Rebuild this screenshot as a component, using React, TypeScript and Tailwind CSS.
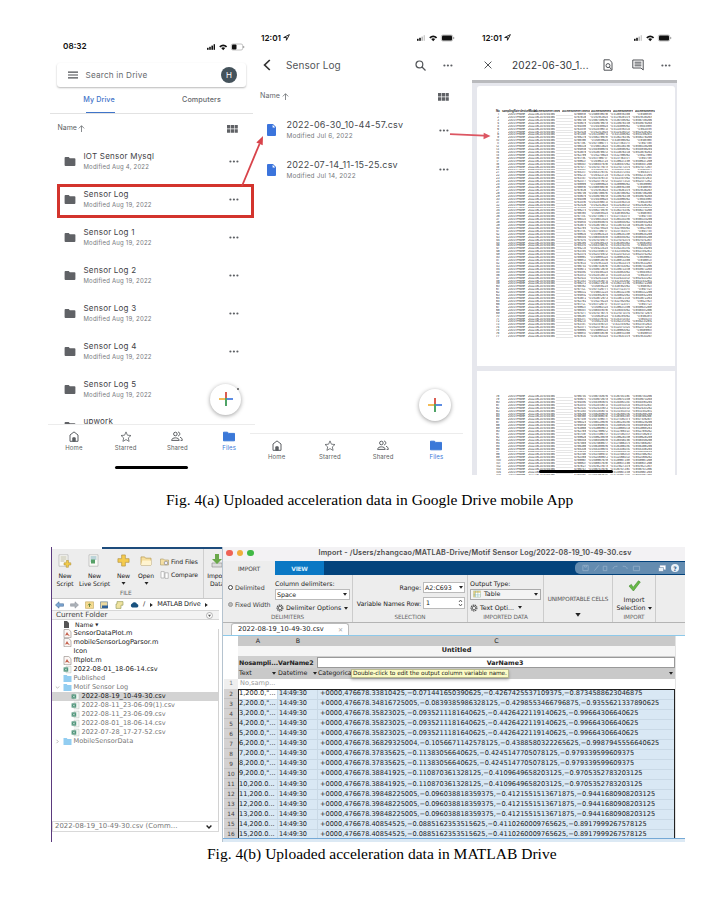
import type { ReactNode } from 'react';

const inter = "font-['Inter','Liberation_Sans',sans-serif]";
const dejavu = "font-['DejaVu_Sans',sans-serif]";

/* ---------- shared icons ---------- */

function Folder({ className }: { className: string }) {
  return (
    <svg viewBox="0 0 12 10" className={className} fill="currentColor">
      <path d="M1 0h3.6l1.2 1.3H11q1 0 1 1V9q0 1-1 1H1Q0 10 0 9V1q0-1 1-1z" />
    </svg>
  );
}

function Dots() {
  return (
    <svg viewBox="0 0 10 3" className="h-[3px] w-[10px] shrink-0" fill="#5c5f63">
      <circle cx="1.4" cy="1.5" r="1.1" />
      <circle cx="4.9" cy="1.5" r="1.1" />
      <circle cx="8.4" cy="1.5" r="1.1" />
    </svg>
  );
}

function GridIcon() {
  return (
    <svg viewBox="0 0 11 8" className="h-[8px] w-[11px] shrink-0" fill="#5f6165">
      <path d="M0 0h3.2v3.6H0zM3.8 0H7v3.6H3.8zM7.6 0h3.2v3.6H7.6zM0 4.3h3.2v3.5H0zM3.8 4.3H7v3.5H3.8zM7.6 4.3h3.2v3.5H7.6z" />
    </svg>
  );
}

function UpArrow() {
  return (
    <svg viewBox="0 0 7 7" className="h-[7px] w-[7px]" fill="none" stroke="#6b6e72" strokeWidth="0.8">
      <path d="M3.5 7V.8M.8 3.4 3.5.7l2.7 2.7" />
    </svg>
  );
}

function StatusIcons({ low, weak }: { low?: boolean; weak?: boolean }) {
  return (
    <svg viewBox="0 0 38 8" className="h-[8px] w-[38px] shrink-0" fill="#111">
      <rect x="0" y="4.8" width="1.6" height="2" />
      <rect x="2.2" y="3.8" width="1.6" height="3" />
      <rect x="4.4" y="2.6" width="1.6" height="4.2" fill={weak ? '#bbb' : '#111'} />
      <rect x="6.6" y="1.2" width="1.4" height="5.6" fill={weak ? '#ccc' : '#111'} />
      <path d="M12.2 3.2Q16.2-.4 20.2 3.2L19 4.5Q16.2 2 13.4 4.5z" />
      <path d="M14.2 5.1Q16.2 3.5 18.2 5.1L16.2 7.2z" />
      <rect x="24.3" y="1" width="11.4" height="6" rx="1.6" fill="none" stroke="#999" strokeWidth=".6" />
      <rect x="25" y="1.6" width={low ? 4.5 : 10} height="4.8" rx="1" />
      <rect x="36.2" y="3" width="1" height="2" fill="#999" />
    </svg>
  );
}

function Fab({ className }: { className: string }) {
  return (
    <div className={`absolute flex items-center justify-center rounded-full bg-white shadow-[0_1px_4px_rgba(0,0,0,0.38)] ${className}`}>
      <svg viewBox="0 0 14 14" className="h-[14px] w-[14px]">
        <path d="M6.1 0h1.8v6.1H6.1z" fill="#d64b3f" />
        <path d="M0 6.1h6.1v1.8H0z" fill="#f2b544" />
        <path d="M6.1 6.1h1.8V14H6.1z" fill="#3c9a56" />
        <path d="M7.9 6.1H14v1.8H7.9z" fill="#4a7fe0" />
      </svg>
    </div>
  );
}

function NavItem({ label, active, children }: { label: string; active?: boolean; children: ReactNode }) {
  return (
    <div className={`flex flex-1 flex-col items-center gap-[2px] ${active ? 'text-[#3b78d8]' : 'text-[#5c5f63]'}`}>
      <svg viewBox="0 0 12 11" className="h-[11px] w-[12px]" fill="none" stroke="currentColor" strokeWidth="1">
        {children}
      </svg>
      <span className="text-[6px] leading-[8px] tracking-[0.1px]">{label}</span>
    </div>
  );
}

function BottomNav({ className }: { className: string }) {
  return (
    <div className={`flex border-t border-[#ececec] ${className}`}>
      <NavItem label="Home">
        <path d="M2 10.3V4L6 .9 10 4v6.3z" />
        <path d="M4.8 10.3V6.8h2.4v3.5z" fill="currentColor" />
      </NavItem>
      <NavItem label="Starred">
        <path d="m6 .9 1.4 3.3 3.6.3-2.7 2.4.8 3.5L6 8.6l-3.1 1.8.8-3.5L1 4.5l3.6-.3z" strokeWidth=".8" />
      </NavItem>
      <NavItem label="Shared">
        <circle cx="4.4" cy="3" r="1.8" />
        <path d="M.6 9.4c0-3.4 7.6-3.4 7.6 0zM7 1.2c2.4-.4 2.4 3.8 0 3.6M9 6.3c1.4.4 2.3 1.3 2.3 3.1H9.6" />
      </NavItem>
      <NavItem label="Files" active>
        <path d="M.5 1.2h4l1.2 1.2h5.8v7.4H.5z" fill="currentColor" />
      </NavItem>
    </div>
  );
}

/* ---------- phone screens ---------- */

const folders: [string, string][] = [
  ['IOT Sensor Mysql', 'Modified Aug 4, 2022'],
  ['Sensor Log', 'Modified Aug 19, 2022'],
  ['Sensor Log 1', 'Modified Aug 19, 2022'],
  ['Sensor Log 2', 'Modified Aug 19, 2022'],
  ['Sensor Log 3', 'Modified Aug 19, 2022'],
  ['Sensor Log 4', 'Modified Aug 19, 2022'],
  ['Sensor Log 5', 'Modified Aug 19, 2022'],
];

function DriveHome() {
  return (
    <div className="relative flex h-[445px] w-[203px] flex-col">
      <div className="flex h-[33px] items-center justify-between pr-[8px] pl-[13px]">
        <span className="text-[8.2px] font-semibold text-[#111]">08:32</span>
        <StatusIcons low />
      </div>
      <div className="mx-[7px] flex h-[24px] shrink-0 items-center rounded-[3px] pr-[9px] pl-[11px] shadow-[0_1px_2px_rgba(0,0,0,0.28)]">
        <svg viewBox="0 0 10 8" className="h-[8px] w-[10px]" stroke="#4c4f53" strokeWidth="1.2">
          <path d="M0 1.2h10M0 4h10M0 6.8h10" />
        </svg>
        <span className="ml-[7.5px] text-[8.2px] tracking-[0.2px] text-[#66696d]">Search in Drive</span>
        <span className="ml-auto flex h-[16px] w-[16px] items-center justify-center rounded-full bg-[#44525b] text-[8px] text-white">H</span>
      </div>
      <div className="flex h-[27px] shrink-0 border-b border-[#e2e2e2] text-[7.2px] font-medium tracking-[0.1px]">
        <div className="flex w-[101px] flex-col items-center">
          <span className="flex h-[25px] items-center pt-[2px] pr-[3px] text-[#3f74c9]">My Drive</span>
          <span className="h-[1.5px] w-[29px] bg-[#3f74c9]" />
        </div>
        <span className="flex h-[25px] w-[101px] items-center justify-center pt-[2px] text-[#66696d]">Computers</span>
      </div>
      <div className="flex h-[29px] shrink-0 items-center justify-between pr-[15px] pl-[7.5px] text-[7px] text-[#5c5f63]">
        <span className="flex items-center gap-[1.5px]">Name <UpArrow /></span>
        <GridIcon />
      </div>
      {folders.map(([name, date], i) => (
        <div key={name} className="flex h-[37.9px] shrink-0 items-center pr-[14px] pl-[13.5px]">
          <Folder className="h-[9px] w-[12px] text-[#606266]" />
          <div className="ml-[8px] flex flex-1 flex-col gap-[1px]">
            <span className="text-[8px] leading-[10px] tracking-[0.22px] text-[#3f4246]">{name}</span>
            <span className="text-[6px] leading-[10px] tracking-[0.2px] text-[#777a7e]">{date}</span>
          </div>
          {i < 6 && <Dots />}
        </div>
      ))}
      <div className="flex h-[16px] shrink-0 items-start overflow-hidden pt-[8px] pl-[13.5px]">
        <Folder className="mt-[6px] h-[9px] w-[12px] text-[#606266]" />
        <span className="ml-[8px] text-[8px] leading-[10px] tracking-[0.22px] text-[#3f4246]">upwork</span>
      </div>
      <BottomNav className="-mx-[2px] h-[38px] shrink-0 pt-[6px]" />
      <div className="mx-auto mt-[4px] h-[2.5px] w-[73px] rounded-full bg-black" />
      <Fab className="top-[353.5px] left-[160px] h-[31px] w-[31px]" />
      <span className="absolute top-[358px] left-[187px] h-[1.5px] w-[1.5px] rounded-full bg-[#555]" />
    </div>
  );
}

function Clock() {
  return (
    <span className="flex items-center gap-[2px] text-[8.2px] font-semibold text-[#111]">
      12:01
      <svg viewBox="0 0 8 8" className="h-[7px] w-[7px]" fill="none" stroke="#111" strokeWidth="1">
        <path d="M7.3.7.8 4h3.1v3.2z" />
      </svg>
    </span>
  );
}

function FileRow({ name, date }: { name: string; date: string }) {
  return (
    <div className="flex h-[39.5px] shrink-0 items-center pr-[23px] pl-[14px]">
      <svg viewBox="0 0 9 12" className="h-[12px] w-[9px]">
        <path d="M1 0h5l3 3v8q0 1-1 1H1q-1 0-1-1V1q0-1 1-1z" fill="#3b74dc" />
        <path d="M5.6.8v2.7h2.7z" fill="#fff" />
      </svg>
      <div className="ml-[10.5px] flex flex-1 flex-col">
        <span className="text-[9px] leading-[12px] tracking-[0.22px] text-[#45484c]">{name}</span>
        <span className="text-[6.4px] leading-[10px] tracking-[0.2px] text-[#777a7e]">{date}</span>
      </div>
      <Dots />
    </div>
  );
}

function DriveFolder() {
  return (
    <div className="relative flex h-[445px] w-[219px] flex-col">
      <div className="flex h-[16px] shrink-0 items-center justify-between pr-[17px] pl-[8px]">
        <Clock />
        <StatusIcons weak />
      </div>
      <div className="flex h-[38px] shrink-0 items-center pr-[19px] pl-[10px]">
        <svg viewBox="0 0 8 12" className="h-[12px] w-[8px]" fill="none" stroke="#333" strokeWidth="1.7">
          <path d="M6.8 1 1.6 6l5.2 5" />
        </svg>
        <span className="ml-[15px] flex-1 text-[10px] tracking-[0.1px] text-[#53565a]">Sensor Log</span>
        <svg viewBox="0 0 11 11" className="mr-[17px] h-[11px] w-[11px]" fill="none" stroke="#505357" strokeWidth="1.2">
          <circle cx="4.4" cy="4.4" r="3.4" />
          <path d="m7 7 3.5 3.5" />
        </svg>
        <Dots />
      </div>
      <div className="flex h-[25px] shrink-0 items-center justify-between pr-[23px] pl-[7px] text-[7.2px] text-[#66696d]">
        <span className="flex items-center gap-[2px]">Name <UpArrow /></span>
        <GridIcon />
      </div>
      <div className="mt-[1.5px] flex-1">
        <FileRow name="2022-06-30_10-44-57.csv" date="Modified Jul 6, 2022" />
        <FileRow name="2022-07-14_11-15-25.csv" date="Modified Jul 14, 2022" />
      </div>
      <BottomNav className="mr-[9px] -ml-[3px] h-[42px] shrink-0 pt-[6px]" />
      <Fab className="top-[359px] left-[166px] h-[32px] w-[32px]" />
    </div>
  );
}

function SheetRow({ n, second }: { n: number; second?: boolean }) {
  const a = ((n * 7919) % 8999) + 1000;
  const short = (k: number) => !second && (n * k) % 5 < 2;
  return (
    <div className="flex h-[2.93px] shrink-0 items-center overflow-hidden text-[2.9px] leading-[3px] whitespace-nowrap text-[#222]">
      <span className="w-[3px] text-right">{n}</span>
      <span className="ml-[9px] w-[18px] overflow-hidden tracking-[-0.1px]">200.0 iPhone 12</span>
      <span className="ml-[2px] w-[27px] overflow-hidden tracking-[-0.22px]">2022-06-30 10:44:58.000 +00</span>
      <span className="mx-px h-[2.93px] w-[17px] border-b-[0.4px] border-[#e6e6e6]" />
      <span className="w-[12px] overflow-hidden">{`476${a}.25`}</span>
      <span className="ml-[2px] w-[20px] overflow-hidden text-right">{short(3) ? `-0.04${a}25` : `-0.04${a}67${a}`}</span>
      <span className="ml-[2px] w-[20px] overflow-hidden text-right">{short(7) ? `-0.53${a}062` : `-0.53${a}31${a}`}</span>
      <span className="ml-[2px] w-[20px] overflow-hidden text-right">{short(11) ? `-0.84${a}1` : `-0.84${a}26${a}`}</span>
    </div>
  );
}

function DocumentPreview() {
  return (
    <div className="relative flex h-[445px] w-[213px] flex-col">
      <div className="flex h-[16px] shrink-0 items-center justify-between pr-[13px] pl-[10px]">
        <Clock />
        <StatusIcons weak />
      </div>
      <div className="flex h-[34px] shrink-0 items-center pt-[4px] pr-[14px] pl-[12px]">
        <svg viewBox="0 0 8 8" className="h-[8px] w-[8px]" stroke="#505357" strokeWidth="1">
          <path d="m.6.6 6.8 6.8M7.4.6.6 7.4" />
        </svg>
        <span className="ml-[20px] flex-1 text-[10px] tracking-[0.15px] text-[#33363a]">2022-06-30_1...</span>
        <svg viewBox="0 0 10 12" className="mr-[19px] h-[12px] w-[10px]" fill="none" stroke="#505357" strokeWidth="1">
          <path d="M1 .8h5.4L9 3.4v7.8H1z" />
          <circle cx="5" cy="6.6" r="2" />
          <path d="m6.4 8 2 2.4" />
        </svg>
        <svg viewBox="0 0 12 12" className="mr-[17px] h-[12px] w-[12px]" fill="none" stroke="#505357" strokeWidth="1">
          <path d="M.8 1h10.4v10L9 9H.8zM2.6 3.2h6.8M2.6 5h6.8M2.6 6.8h6.8" />
        </svg>
        <Dots />
      </div>
      <div className="mr-[8px] flex h-[395px] flex-col overflow-hidden border-t-[3px] border-[#b9babd] bg-[#e6e7ed] pr-[2px] pl-[5px]">
        <div className="mt-[3px] h-[280px] shrink-0 rounded-t-[3px] bg-white pt-[24px] pl-[19px]">
          <div className="flex h-[3px] items-center text-[2.9px] leading-[3px] font-bold tracking-[-0.15px] whitespace-nowrap text-[#333]">
            <span className="w-[6px]">No</span>
            <span className="w-[32px]">samplingRate deviceModel</span>
            <span className="w-[26px] overflow-hidden">accelerometerTimestamp</span>
            <span className="ml-[2px] w-[28px] overflow-hidden">accelerometerTimeSinceReboot</span>
            <span className="ml-[1px] w-[20px] overflow-hidden">accelerometerX</span>
            <span className="ml-[2px] w-[20px] overflow-hidden">accelerometerY</span>
            <span className="ml-[2px] w-[20px] overflow-hidden">accelerometerZ</span>
          </div>
          {Array.from({ length: 77 }, (_, i) => <SheetRow key={i} n={i + 1} />)}
        </div>
        <div className="mt-[5px] flex-1 overflow-hidden bg-white pt-[24px] pl-[19px]">
          {Array.from({ length: 28 }, (_, i) => <SheetRow key={i} n={i + 78} second />)}
        </div>
      </div>
      <div className="absolute top-[440px] left-[67px] h-[2.5px] w-[74px] rounded-full bg-black" />
    </div>
  );
}

/* ---------- MATLAB: main window ---------- */

function ScriptIcon({ live, plus }: { live?: boolean; plus?: boolean }) {
  return (
    <svg viewBox="0 0 14 14" className="h-[14px] w-[14px]">
      <path d="M1 .8h9v11.4H1z" fill="#fafaf6" stroke="#aaa" strokeWidth=".6" />
      <path d="M2.5 3h6M2.5 5h6M2.5 7h4" stroke={live ? '#6fa5b5' : '#b7b49a'} strokeWidth=".9" />
      {live && <path d="M3 5.5h4v4H3z" fill="#57a067" />}
      {plus && <path d="M8.2 6.5h2.2v2.3h2.4V11h-2.4v2.3H8.2V11H6V8.8h2.2z" fill="#f3cc4c" stroke="#a98a30" strokeWidth=".5" />}
    </svg>
  );
}

function Ribbon({ className, icon, lines, arrow }: { className: string; icon: ReactNode; lines: string[]; arrow?: boolean }) {
  return (
    <div className={`flex shrink-0 flex-col items-center pt-[4px] ${className}`}>
      <span className="flex h-[16px] items-center">{icon}</span>
      <span className="mt-[3px] flex flex-col items-center leading-[8.2px] whitespace-nowrap">
        {lines.map((l) => <span key={l}>{l}</span>)}
      </span>
      {arrow && <Caret className="mt-[2px] h-[3px] w-[5px]" />}
    </div>
  );
}

function Caret({ className = 'h-[3px] w-[4px]' }: { className?: string }) {
  return (
    <svg viewBox="0 0 4 3" className={`shrink-0 ${className}`} fill="#222">
      <path d="M0 0h4L2 2.8z" />
    </svg>
  );
}

type Entry = { name: string; kind: 'm' | 'csv' | 'dir' | 'none'; child?: boolean; selected?: boolean; toggle?: string; dim?: boolean };

const entries: Entry[] = [
  { name: 'SensorDataPlot.m', kind: 'm' },
  { name: 'mobileSensorLogParsor.m', kind: 'm' },
  { name: 'Icon', kind: 'none' },
  { name: 'fftplot.m', kind: 'm' },
  { name: '2022-08-01_18-06-14.csv', kind: 'csv' },
  { name: 'Published', kind: 'dir', dim: true },
  { name: 'Motif Sensor Log', kind: 'dir', toggle: 'M.8 1.5 2.5 3.2 4.2 1.5', dim: true },
  { name: '2022-08-19_10-49-30.csv', kind: 'csv', child: true, selected: true },
  { name: '2022-08-11_23-06-09(1).csv', kind: 'csv', child: true, dim: true },
  { name: '2022-08-11_23-06-09.csv', kind: 'csv', child: true, dim: true },
  { name: '2022-08-01_18-06-14.csv', kind: 'csv', child: true, dim: true },
  { name: '2022-07-28_17-27-52.csv', kind: 'csv', child: true, dim: true },
  { name: 'MobileSensorData', kind: 'dir', toggle: 'M1.5.8 3.2 2.5 1.5 4.2', dim: true },
];

function EntryIcon({ kind }: { kind: Entry['kind'] }) {
  return (
    <svg viewBox="0 0 9 9" className="h-[9px] w-[9px] shrink-0">
      {kind === 'm' && (
        <>
          <path d="M1 .5h4.8L8 2.7v6H1z" fill="#fbf7f5" stroke="#8f8580" strokeWidth=".6" />
          <path d="M2 6.5 4 3l1.2 2L7 7.3 4.2 6z" fill="#c5604c" />
        </>
      )}
      {kind === 'csv' && (
        <>
          <path d="M3 1.2h5v6.6H3z" fill="#f2f6f3" stroke="#b4beb8" strokeWidth=".5" />
          <path d="M.6 2.4h4.6v4.2H.6z" fill="#4b9277" />
          <path d="m2 3.5 1.8 2M3.8 3.5 2 5.5" stroke="#fff" strokeWidth=".6" />
        </>
      )}
      {kind === 'dir' && <path d="M.5 1h3.2l.8 1h4v6h-8z" fill="#92cdf1" />}
    </svg>
  );
}

function MainWindow() {
  return (
    <div className="flex h-[295px] w-[171px] flex-col overflow-hidden border-l-[1.5px] border-[#5b3a7d] bg-white text-[6.6px] text-[#222]">
      <div className="ml-[50px] h-[1.5px] shrink-0 bg-[#1d4c7c]" />
      <div className="relative flex h-[50.5px] shrink-0 overflow-hidden border-b border-[#c9c9c9] bg-[#ededed] text-[6.1px] font-medium tracking-[-0.1px]">
        <Ribbon className="w-[26px]" icon={<ScriptIcon plus />} lines={['New', 'Script']} />
        <Ribbon className="w-[33px]" icon={<ScriptIcon live />} lines={['New', 'Live Script']} />
        <Ribbon
          className="w-[25px]"
          arrow
          lines={['New']}
          icon={
            <svg viewBox="0 0 14 14" className="h-[13px] w-[13px]">
              <path d="M5 1h4v4h4v4H9v4H5V9H1V5h4z" fill="#f5cb4e" stroke="#b08f3d" strokeWidth=".7" />
            </svg>
          }
        />
        <Ribbon
          className="w-[20px]"
          arrow
          lines={['Open']}
          icon={
            <svg viewBox="0 0 13 11" className="h-[10px] w-[12px]">
              <path d="M1 1h4l1 1.4h6V10H1z" fill="#f7df9d" stroke="#b99a4e" strokeWidth=".8" />
              <path d="M2.5 5H12v5H1z" fill="#fff4d0" />
            </svg>
          }
        />
        <div className="flex w-[47px] shrink-0 flex-col gap-[5px] pt-[9px] pl-[4px] leading-[8px] whitespace-nowrap">
          <span className="flex items-center gap-[2px]">
            <svg viewBox="0 0 9 8" className="h-[8px] w-[9px]"><path d="M.5 1h3l1 1h4v5h-8z" fill="#f5dfa3" stroke="#a89866" strokeWidth=".6" /><circle cx="6" cy="5" r="1.8" fill="#eef" stroke="#777" strokeWidth=".6" /></svg>
            Find Files
          </span>
          <span className="flex items-center gap-[2px]">
            <svg viewBox="0 0 9 8" className="h-[8px] w-[9px]" fill="#fff" stroke="#999" strokeWidth=".6"><path d="M1 .6h3.2V7H1zM5 1.8h3.2v5.6H5z" /></svg>
            Compare
          </span>
        </div>
        <div className="flex-1 border-l border-[#cfcfcf]">
          <Ribbon
            className="w-[26px]"
            lines={['Import', 'Data']}
            icon={
              <svg viewBox="0 0 14 14" className="h-[14px] w-[14px]">
                <path d="M2 9h10v4H2z" fill="#ddd" stroke="#888" strokeWidth=".6" />
                <path d="M5 0h4v5h3l-5 5-5-5h3z" fill="#6aa84a" />
              </svg>
            }
          />
        </div>
        <span className="absolute bottom-[1px] left-[68px] text-[5.8px] leading-[8px] text-[#666]">FILE</span>
      </div>
      <div className="flex h-[11px] shrink-0 items-center gap-[6px] pl-[3px] whitespace-nowrap">
        <svg viewBox="0 0 9 8" className="h-[8px] w-[9px]"><path d="M.5 4 4 .8v2h4.5v2.4H4v2z" fill="#7fa9d6" stroke="#4a6f99" strokeWidth=".6" /></svg>
        <svg viewBox="0 0 9 8" className="h-[8px] w-[9px]"><path d="M8.5 4 5 .8v2H.5v2.4H5v2z" fill="#adb3ba" stroke="#8a8f96" strokeWidth=".5" /></svg>
        <svg viewBox="0 0 9 8" className="h-[8px] w-[9px]"><path d="M.5.8h8v6.6h-8z" fill="#f6dc91" stroke="#b7984a" strokeWidth=".5" /><path d="M4.5 6V3M3 4.3l1.5-1.6L6 4.3" fill="none" stroke="#5d7e3a" strokeWidth=".9" /></svg>
        <svg viewBox="0 0 9 8" className="h-[8px] w-[9px]"><path d="M.5.8h7v6.6h-7z" fill="#ecd9a0" stroke="#597692" strokeWidth=".6" /><path d="M2 4.5h6V7H2z" fill="#2d5f98" /></svg>
        <svg viewBox="0 0 9 8" className="h-[8px] w-[9px]"><path d="M2 .6h6v3.6H6V7.4H1V3h1z" fill="#efe3a0" stroke="#8d9350" strokeWidth=".6" /></svg>
        <svg viewBox="0 0 9 7" className="h-[7px] w-[9px]"><path d="M2.2 6.4a2 2 0 0 1 0-3.8 2.6 2.6 0 0 1 4.8.3 1.8 1.8 0 0 1 0 3.5z" fill="#19527f" /></svg>
        <span className="-ml-[2px]">/</span>
        <svg viewBox="0 0 3 4" className="-ml-[1px] h-[4px] w-[3px]"><path d="M0 0v4l2.8-2z" fill="#222" /></svg>
        <span className="-ml-[2px] text-[6.5px] tracking-[-0.2px] text-[#222]">MATLAB Drive</span>
        <svg viewBox="0 0 3 4" className="-ml-[1px] h-[4px] w-[3px]"><path d="M0 0v4l2.8-2z" fill="#222" /></svg>
      </div>
      <div className="mr-[3px] flex h-[10px] shrink-0 items-center justify-between border-y border-[#d7d7d7] bg-[#f3f3f3] pr-[6px] pl-[4px] text-[7.2px] text-[#444]">
        Current Folder
        <svg viewBox="0 0 7 7" className="h-[7px] w-[7px]"><circle cx="3.5" cy="3.5" r="3" fill="#fff" stroke="#888" strokeWidth=".6" /><path d="M2 2.8h3L3.5 5z" fill="#555" /></svg>
      </div>
      <div className="flex h-[9px] shrink-0 items-center pl-[12px]">
        <svg viewBox="0 0 5 7" className="h-[7px] w-[5px]"><path d="M0 0h3l2 2v5H0z" fill="#555" /></svg>
        <span className="ml-[6px] text-[6.2px]">Name</span>
        <span className="ml-[2px] text-[4px]">▼</span>
      </div>
      <div className="mr-[3px] flex-1 border-r border-[#d2d2d2]">
        {entries.map((e, i) => (
          <div
            key={i}
            className={`flex h-[9.02px] items-center whitespace-nowrap ${e.selected ? 'bg-[#d3d3d3] text-[#222]' : e.dim ? 'text-[#777]' : 'text-[#222]'}`}
          >
            <span className={`flex shrink-0 items-center ${e.child ? 'w-[19px]' : 'w-[11px]'}`}>
              {e.toggle && (
                <svg viewBox="0 0 5 5" className="ml-[3px] h-[5px] w-[5px]" fill="none" stroke="#aaa" strokeWidth=".8"><path d={e.toggle} /></svg>
              )}
            </span>
            <EntryIcon kind={e.kind} />
            <span className="ml-[1.5px] tracking-[-0.02px]">{e.name}</span>
          </div>
        ))}
      </div>
      <div className="mr-[3px] flex h-[11px] shrink-0 items-center justify-between border border-[#d9d9d9] pr-[6px] pl-[2px] text-[6.9px] whitespace-nowrap text-[#777]">
        2022-08-19_10-49-30.csv (Comm...
        <svg viewBox="0 0 6 4" className="h-[4px] w-[6px]" fill="none" stroke="#222" strokeWidth="1.4"><path d="m.6.6 2.4 2.4L5.4.6" /></svg>
      </div>
      <div className="h-[10px] shrink-0" />
    </div>
  );
}

/* ---------- MATLAB: import window ---------- */

function Gear() {
  return (
    <svg viewBox="0 0 8 8" className="h-[8px] w-[8px] shrink-0" fill="none" stroke="#555">
      <circle cx="4" cy="4" r="2.9" strokeWidth="1.2" strokeDasharray="1.4 .6" />
      <circle cx="4" cy="4" r="1.7" strokeWidth=".8" />
    </svg>
  );
}

function Group({ className, caption, children }: { className: string; caption: string; children?: ReactNode }) {
  return (
    <div className={`flex shrink-0 flex-col border-r border-[#cccccc] ${className}`}>
      <div className="flex flex-1">{children}</div>
      <span className="h-[9px] text-center text-[5.7px] leading-[9px] tracking-[-0.1px] text-[#666]">{caption}</span>
    </div>
  );
}

const tail4 = '+0000,476678.35823025,−0.0935211181640625,−0.4426422119140625,−0.99664306640625';
const tail8 = '+0000,476678.37835625,−0.11383056640625,−0.4245147705078125,−0.979339599609375';
const tail10 = '+0000,476678.38841925,−0.110870361328125,−0.4109649658203125,−0.9705352783203125';
const tail12 = '+0000,476678.39848225005,−0.096038818359375,−0.4121551513671875,−0.9441680908203125';
const tail15 = '+0000,476678.40854525,−0.0885162353515625,−0.4110260009765625,−0.8917999267578125';

const samples: [string, string][] = [
  ['1,200.0,"...', '+0000,476678.33810425,−0.071441650390625,−0.4267425537109375,−0.8734588623046875'],
  ['2,200.0,"...', '+0000,476678.34816725005,−0.0839385986328125,−0.4298553466796875,−0.9355621337890625'],
  ['3,200.0,"...', tail4],
  ['4,200.0,"...', tail4],
  ['5,200.0,"...', tail4],
  ['6,200.0,"...', '+0000,476678.36829325004,−0.1056671142578125,−0.4388580322265625,−0.9987945556640625'],
  ['7,200.0,"...', tail8],
  ['8,200.0,"...', tail8],
  ['9,200.0,"...', tail10],
  ['10,200.0...', tail10],
  ['11,200.0...', tail12],
  ['12,200.0...', tail12],
  ['13,200.0...', tail12],
  ['14,200.0...', tail15],
  ['15,200.0...', tail15],
];

function ImportWindow() {
  return (
    <div className="flex h-[295px] w-[463px] flex-col overflow-hidden border-l border-[#b5c3cf] bg-white text-[6.3px] text-[#222]">
      <div className="flex h-[14px] shrink-0 items-center bg-[#f3f2f4] pl-[3px]">
        <span className="mb-[2px] flex gap-[4px]">
          <span className="h-[6.5px] w-[6.5px] rounded-full bg-[#ee6256]" />
          <span className="h-[6.5px] w-[6.5px] rounded-full bg-[#f0ae3c]" />
          <span className="h-[6.5px] w-[6.5px] rounded-full bg-[#41b946]" />
        </span>
        <span className="mb-[2px] ml-[65px] font-['Inter',sans-serif] text-[7.2px] font-semibold tracking-[0.16px] whitespace-nowrap text-[#4b4b4b]">
          Import - /Users/zhangcao/MATLAB-Drive/Motif Sensor Log/2022-08-19_10-49-30.csv
        </span>
      </div>
      <div className="flex h-[14px] shrink-0 bg-[#03437c] text-[6px]">
        <span className="flex w-[52px] items-center justify-center bg-[#ededed] tracking-[-0.1px] text-[#444]">IMPORT</span>
        <span className="flex w-[49px] items-center justify-center bg-[#0a78c4] font-bold tracking-[-0.3px] text-[#d5ecfb]">VIEW</span>
        <div className="my-[1px] ml-auto flex w-[110px] items-center justify-end gap-[5px] rounded-l-[5px] bg-[#648cb0] pr-[6px]">
          <svg viewBox="0 0 70 8" className="mr-auto ml-[7px] h-[8px] w-[62px]" fill="none" stroke="#8facc7" strokeWidth="1">
            <path d="M1 1h6v6H1zM3 1v2h2V1M14 7l5-6M24 2h4v5h-4zM35 5q0-3 5-3M46 2q5 0 5 3M58 2h7v5h-7z" />
          </svg>
          <svg viewBox="0 0 8 7" className="h-[7px] w-[8px]"><path d="M2 .5h5.5v4H2z" fill="#fff" stroke="#ccd" strokeWidth=".4" /><path d="M.5 2.5h5v4h-5z" fill="#e9f1f8" stroke="#557799" strokeWidth=".5" /></svg>
          <span className="flex h-[8px] w-[8px] items-center justify-center rounded-full bg-[#e9f1f8] text-[6px] font-bold text-[#345f8c]">?</span>
        </div>
      </div>
      <div className="flex h-[48px] shrink-0 border-b border-[#b4b4b4] bg-[#ededed]">
        <Group className="w-[130px]" caption="DELIMITERS">
          <div className="flex w-[52px] flex-col gap-[8px] pt-[8px] pl-[5px] leading-[9px] tracking-[-0.1px] whitespace-nowrap text-[#444]">
            <span className="flex items-center gap-[2px]"><i className="h-[5px] w-[5px] rounded-full border border-[#444] bg-white" />Delimited</span>
            <span className="flex items-center gap-[2px]"><i className="h-[5px] w-[5px] rounded-full border border-[#999] bg-[#bbb]" />Fixed Width</span>
          </div>
          <div className="flex w-[75px] flex-col pt-[4px] whitespace-nowrap">
            <span className="leading-[9px]">Column delimiters:</span>
            <span className="mt-[1px] flex h-[11px] items-center justify-between border border-[#bbb] bg-white pr-[2px] pl-[1px]">Space <Caret /></span>
            <span className="mt-[3px] flex h-[10px] items-center gap-[2px] pr-[2px] pl-[1px]"><Gear />Delimiter Options <Caret className="ml-auto h-[3px] w-[4px]" /></span>
          </div>
        </Group>
        <Group className="w-[115px]" caption="SELECTION">
          <div className="flex w-[68px] flex-col items-end gap-[7px] pt-[8px] leading-[9px] tracking-[-0.1px] whitespace-nowrap">
            <span>Range:</span>
            <span>Variable Names Row:</span>
          </div>
          <div className="flex flex-col gap-[4px] pt-[7px] pl-[2px]">
            <span className="flex h-[11px] w-[42px] items-center justify-between border border-[#bbb] bg-white pr-[1px] pl-[1px]">A2:C693 <Caret /></span>
            <span className="flex h-[12px] w-[42px] items-center justify-between border border-[#bbb] bg-white pr-[1px] pl-[2px]">
              1
              <svg viewBox="0 0 5 8" className="h-[8px] w-[5px]" fill="none" stroke="#444" strokeWidth=".8"><path d="M1 3 2.5 1 4 3M1 5l1.5 2L4 5" /></svg>
            </span>
          </div>
        </Group>
        <Group className="w-[76px]" caption="IMPORTED DATA">
          <div className="flex w-[73px] flex-col pt-[3.5px] pl-[2px] whitespace-nowrap">
            <span className="leading-[9px]">Output Type:</span>
            <span className="mt-[1px] flex h-[11px] items-center gap-[3px] border border-[#aaa] bg-[#f4f4f4] px-[2px]">
              <svg viewBox="0 0 9 8" className="h-[8px] w-[8px]"><path d="M.5.5h8v7h-8z" fill="#fff" stroke="#8a8" strokeWidth=".5" /><path d="M.5.5h8v2h-8zM.5 2.5h2v5h-2z" fill="#e6cf83" /><path d="M2.7.5v7M5.5.5v7M.5 5h8" stroke="#6aa" strokeWidth=".5" /></svg>
              Table <Caret className="ml-auto h-[3px] w-[4px]" />
            </span>
            <span className="mt-[3px] flex h-[10px] items-center gap-[2px]"><Gear />Text Opti... <Caret className="ml-[2px] h-[3px] w-[4px]" /></span>
          </div>
        </Group>
        <Group className="w-[69px]" caption="">
          <div className="flex flex-1 flex-col items-center gap-[9px] pt-[20px] text-[5.7px] leading-[9px] tracking-[-0.15px] whitespace-nowrap text-[#555]">
            UNIMPORTABLE CELLS
            <Caret className="h-[4px] w-[6px]" />
          </div>
        </Group>
        <Group className="w-[43px]" caption="IMPORT">
          <div className="flex flex-1 flex-col items-center pt-[5px] leading-[8px]">
            <svg viewBox="0 0 13 12" className="mb-[4px] h-[12px] w-[13px]"><path d="m1 6 2.4-1.6 1.7 3L10.4.8 12.3 2 5.4 11z" fill="#68b947" stroke="#3f8a2c" strokeWidth=".6" /></svg>
            <span>Import</span>
            <span className="flex items-center gap-[2px]">Selection <Caret /></span>
          </div>
        </Group>
      </div>
      <div className="flex h-[13px] shrink-0 items-end border-b border-[#8dc9ea] bg-[#ececec] pl-[8px]">
        <span className="flex h-[12px] w-[118px] items-center justify-between rounded-t-[3px] border-x border-t border-[#bbb] bg-white pr-[5px] pl-[6px] text-[6.7px] whitespace-nowrap">
          2022-08-19_10-49-30.csv <span className="text-[6px] text-[#aaa]">✕</span>
        </span>
      </div>
      <div className="relative flex h-[202px] w-[453px] shrink-0 flex-col overflow-hidden border-r border-[#e3e3e3] pl-[1px] whitespace-nowrap">
        <div className="flex h-[10px] shrink-0 bg-[#c9c9c9] text-center leading-[10px]">
          <span className="w-[14px] bg-white" />
          <span className="w-[40px]">A</span>
          <span className="w-[40px]">B</span>
          <span className="flex-1">C</span>
        </div>
        <div className="ml-[14px] flex h-[11px] shrink-0 items-center justify-center border-b border-[#cfcfcf] bg-[#f5f5f5] text-[6.5px] font-bold">Untitled</div>
        <div className="ml-[14px] flex h-[10.5px] shrink-0 items-center bg-[#cfcfcf] text-[6.3px] font-bold">
          <span className="w-[40px] pl-[1px] tracking-[-0.1px]">Nosampli...</span>
          <span className="w-[39px] tracking-[-0.15px]">VarName2</span>
          <span className="flex h-full flex-1 items-center justify-center border border-[#999] bg-white pl-[18px]">VarName3</span>
        </div>
        <div className="relative ml-[14px] flex h-[11px] shrink-0 items-center bg-[#c9c9c9]">
          <span className="flex w-[39px] items-center justify-between pr-[1px] pl-[1px]">Text <Caret /></span>
          <span className="flex w-[40px] items-center justify-between pl-[1px]">Datetime <Caret /></span>
          <span className="pl-[1px] tracking-[-0.05px]">Categorical</span>
          <Caret className="mr-[2px] ml-auto h-[3px] w-[4px]" />
          <span className="absolute top-[1px] left-[113px] flex h-[9px] items-center border border-[#b9ba90] bg-[#fbfbc4] px-[1px] text-[5.8px] tracking-[-0.06px] shadow-[0_2px_3px_rgba(0,0,0,0.25)]">
            Double-click to edit the output column variable name.
          </span>
        </div>
        <div className="flex h-[10px] shrink-0 items-center text-[6.6px]">
          <span className="flex h-full w-[14px] items-center justify-center bg-[#efefef] text-[5.8px] text-[#777]">1</span>
          <span className="w-[40px] pl-[2px] text-[#999]">No,samp...</span>
        </div>
        <div className="flex shrink-0">
          <div className="w-[14px] bg-[#d4d2d2] text-center text-[5.8px] leading-[10.05px] text-[#444]">
            {samples.map((_, i) => (
              <div key={i} className="h-[10.05px] border-b border-[#c4c2c2]">{i + 2}</div>
            ))}
          </div>
          <div className="flex-1 border-x-[1.5px] border-t-[1.5px] border-[#222] bg-[#d9e8f4] text-[6.6px] text-[#1c1c1c]">
            {samples.map(([a, c], i) => (
              <div key={i} className="flex h-[10.05px] items-center border-b border-[#c9d9e6]">
                <span className={`flex h-full w-[39px] items-center border-r border-[#c9d9e6] ${i === 0 ? 'bg-white' : ''}`}>{a}</span>
                <span className="flex h-full w-[40px] items-center border-r border-[#c9d9e6] pl-[1px] tracking-[-0.25px]">14:49:30</span>
                <span className="pl-[2px] tracking-[-0.02px]">{c}</span>
              </div>
            ))}
          </div>
        </div>
      </div>
      <div className="h-[4px] shrink-0 border-t border-[#75a9d6] bg-[#dce9f4]" />
    </div>
  );
}

export default function App() {
  return (
    <main className="relative flex h-[904px] w-[724px] flex-col overflow-hidden bg-white">
      <section className={`mt-[30px] ml-[50px] flex h-[445px] shrink-0 ${inter}`}>
        <DriveHome />
        <DriveFolder />
        <DocumentPreview />
      </section>
      <p className="mt-[15px] ml-[166px] h-[20px] shrink-0 font-['Liberation_Serif',serif] text-[15.5px] leading-[20px] whitespace-nowrap text-black">
        Fig. 4(a) Uploaded acceleration data in Google Drive mobile App
      </p>
      <section className={`mt-[37px] ml-[51px] flex h-[295px] shrink-0 ${dejavu}`}>
        <MainWindow />
        <ImportWindow />
      </section>
      <p className="mt-[2px] ml-[207px] h-[20px] shrink-0 font-['Liberation_Serif',serif] text-[15.5px] leading-[20px] whitespace-nowrap text-black">
        Fig. 4(b) Uploaded acceleration data in MATLAB Drive
      </p>
      <div className="absolute top-[184px] left-[57px] h-[34px] w-[197px] border-[3px] border-[#d3342d]" />
      <svg viewBox="0 0 724 480" className="absolute top-0 left-0 h-[480px] w-[724px]">
        <path d="M242 186 259.5 144" stroke="#d8434a" strokeWidth="1.8" />
        <path d="m263 136-.3 9.2-6.4-2.8z" fill="#d8434a" />
        <path d="M450 134.2 484 135.6" stroke="#dc5662" strokeWidth="1.8" />
        <path d="m490.500 136-7 3.200.2-6.400z" fill="#dc5662" />
      </svg>
    </main>
  );
}
